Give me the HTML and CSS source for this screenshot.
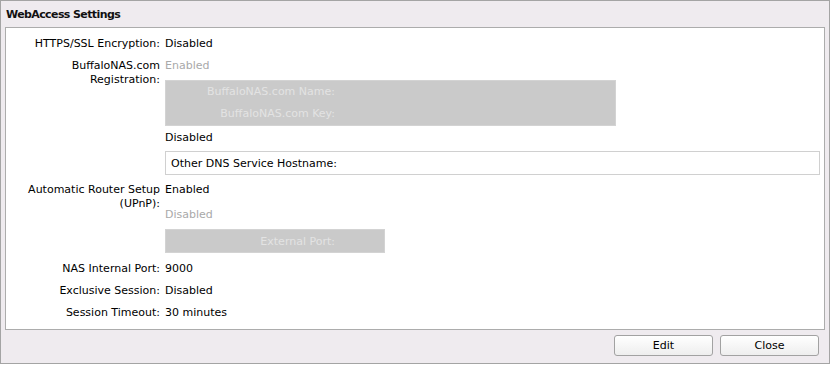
FILE: index.html
```html
<!DOCTYPE html>
<html lang="en">
<head>
  <meta charset="UTF-8">
  <title>WebAccess Settings</title>
  <link rel="stylesheet" href="styles.css">
</head>
<body>
  <div class="window">
    <div class="title">WebAccess Settings</div>

    <div class="panel">
      <div class="row">
        <div class="label">HTTPS/SSL Encryption:</div>
        <div class="value">Disabled</div>
      </div>

      <div class="row">
        <div class="label">BuffaloNAS.com Registration:</div>
        <div class="value">
          <div class="muted">Enabled</div>
          <div class="subbox reg">
            <div class="subrow">BuffaloNAS.com Name:</div>
            <div class="subrow">BuffaloNAS.com Key:</div>
          </div>
          <div class="opt-gap">Disabled</div>
          <div class="field">Other DNS Service Hostname:</div>
        </div>
      </div>

      <div class="row row-upnp">
        <div class="label">Automatic Router Setup (UPnP):</div>
        <div class="value">
          <div>Enabled</div>
          <div class="muted upnp-off">Disabled</div>
          <div class="subbox port">
            <div class="subrow">External Port:</div>
          </div>
        </div>
      </div>

      <div class="row">
        <div class="label">NAS Internal Port:</div>
        <div class="value">9000</div>
      </div>

      <div class="row">
        <div class="label">Exclusive Session:</div>
        <div class="value">Disabled</div>
      </div>

      <div class="row">
        <div class="label">Session Timeout:</div>
        <div class="value">30 minutes</div>
      </div>
    </div>

    <div class="footer">
      <button class="btn">Edit</button>
      <button class="btn">Close</button>
    </div>
  </div>
</body>
</html>
```

FILE: styles.css
```css
* {
  margin: 0;
  padding: 0;
  box-sizing: border-box;
}

body {
  background-color: #ffffff;
  font-family: 'DejaVu Sans', sans-serif;
  font-size: 11px;
  color: #000;
}

.window {
  width: 830px;
  height: 364px;
  border: 1px solid #a4a4a4;
  background-color: #efebef;
  padding: 0 4px;
  display: flex;
  flex-direction: column;
}

.title {
  height: 26px;
  line-height: 24px;
  padding: 2px 0 0 1px;
  font-weight: bold;
  letter-spacing: -0.6px;
  color: #111;
}

.panel {
  background-color: #fff;
  border: 1px solid #acacac;
  padding: 4px 4px 6px 0;
  line-height: 14px;
}

.row {
  display: grid;
  grid-template-columns: 154px 1fr;
  column-gap: 5px;
  padding: 5px 0 3px;
}

.row-upnp {
  padding-bottom: 4px;
}

.label {
  text-align: right;
}

.muted {
  color: #a9a9a9;
}

.subbox {
  background-color: #cacaca;
  border: 1px solid #d3d3d3;
  color: #e3e3e3;
  margin-top: 7px;
}

.subbox.reg {
  width: 451px;
  height: 46px;
}

.subbox.port {
  width: 220px;
  height: 24px;
}

.subrow {
  width: 169px;
  height: 22px;
  line-height: 22px;
  text-align: right;
}

.port .subrow {
  line-height: 23px;
}

.opt-gap {
  margin-top: 5px;
}

.upnp-off {
  margin-top: 11px;
}

.field {
  margin-top: 6px;
  height: 24px;
  line-height: 24px;
  border: 1px solid #d0d0d0;
  padding-left: 5px;
}

.footer {
  flex: 1;
  display: flex;
  justify-content: flex-end;
  align-items: flex-start;
  gap: 7px;
  padding: 5px 6px 0 0;
}

.btn {
  width: 99px;
  height: 21px;
  font-family: 'DejaVu Sans', sans-serif;
  font-size: 11px;
  color: #000;
  border: 1px solid #a2a2a2;
  border-radius: 3px;
  background: linear-gradient(#ffffff, #eeeeee);
}
```
